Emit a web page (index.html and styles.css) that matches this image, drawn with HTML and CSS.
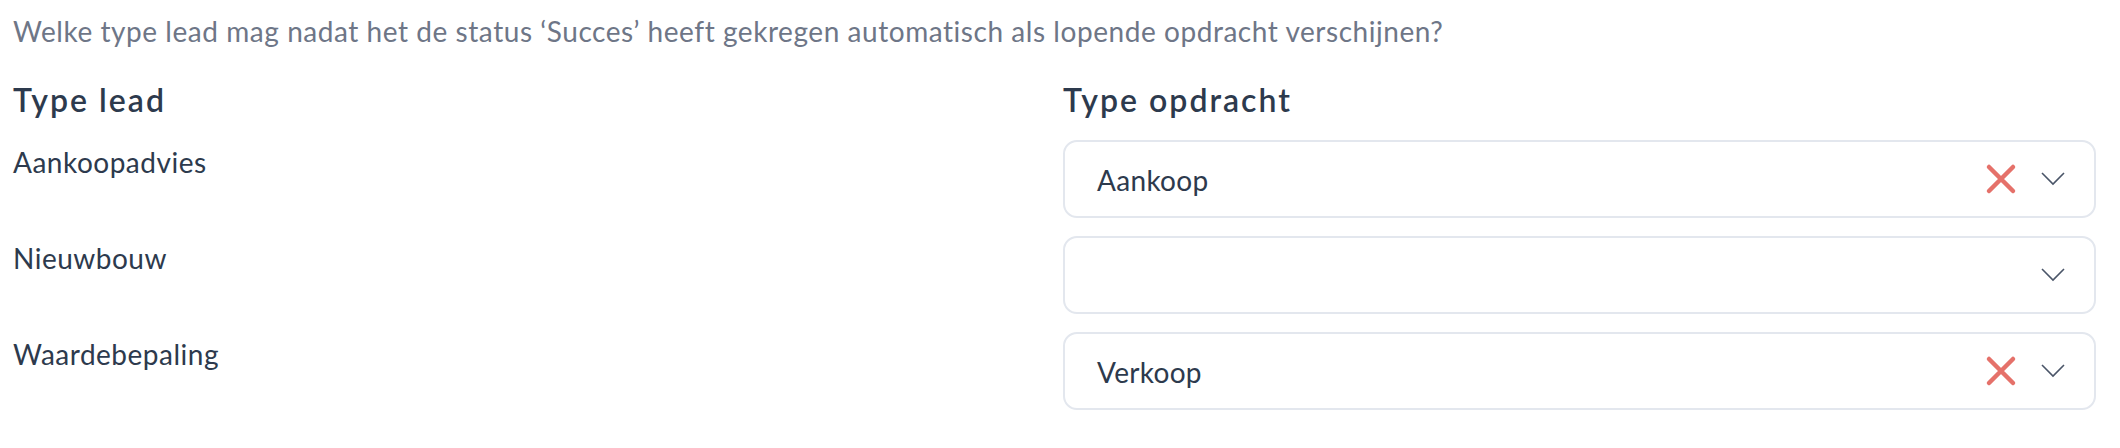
FILE: index.html
```html
<!DOCTYPE html>
<html lang="nl">
<head>
    <meta charset="UTF-8">
    <meta name="viewport" content="width=device-width, initial-scale=1.0">
    <title>Lopende opdrachten</title>
    <link rel="stylesheet" href="styles.css">
</head>
<body>
    <div class="page">
        <p class="question">Welke type lead mag nadat het de status ‘Succes’ heeft gekregen automatisch als lopende opdracht verschijnen?</p>

        <div class="mapping">
            <h3 class="col-title">Type lead</h3>
            <h3 class="col-title">Type opdracht</h3>

            <div class="lead-label">Aankoopadvies</div>
            <div class="select">
                <span class="select-value">Aankoop</span>
                <span class="select-icons">
                    <svg class="icon-clear" viewBox="0 0 32 32"><path d="M4 4 L28 28 M28 4 L4 28"/></svg>
                    <svg class="icon-chevron" viewBox="0 0 24 14"><path d="M1 1 L12 12 L23 1"/></svg>
                </span>
            </div>

            <div class="lead-label">Nieuwbouw</div>
            <div class="select">
                <span class="select-value"></span>
                <span class="select-icons">
                    <svg class="icon-chevron" viewBox="0 0 24 14"><path d="M1 1 L12 12 L23 1"/></svg>
                </span>
            </div>

            <div class="lead-label">Waardebepaling</div>
            <div class="select">
                <span class="select-value">Verkoop</span>
                <span class="select-icons">
                    <svg class="icon-clear" viewBox="0 0 32 32"><path d="M4 4 L28 28 M28 4 L4 28"/></svg>
                    <svg class="icon-chevron" viewBox="0 0 24 14"><path d="M1 1 L12 12 L23 1"/></svg>
                </span>
            </div>
        </div>
    </div>
</body>
</html>
```

FILE: styles.css
```css
:root {
    --text-dark: #2d3a4d;
    --text-muted: #6e7687;
    --border: #e3e7ee;
    --danger: #e5716a;
}

body {
    margin: 0;
    background: #fff;
    font-family: Lato, "Open Sans", sans-serif;
    color: var(--text-dark);
}

.page {
    padding: 14px 24px 0 13px;
}

/* vraag bovenaan */
.question {
    margin: 0;
    font-size: 28px;
    line-height: 34px;
    color: var(--text-muted);
    letter-spacing: 0.55px;
}

/* twee kolommen: lead -> opdracht */
.mapping {
    margin-top: 33px;
    display: grid;
    grid-template-columns: 1fr 1fr;
    column-gap: 17px;
    row-gap: 18px;
    align-items: start;
}

.col-title {
    margin: 0 0 3px;
    font-size: 32px;
    line-height: 38px;
    font-weight: 600;
    letter-spacing: 2px;
}

.lead-label {
    padding-top: 5px;
    font-size: 28px;
    line-height: 34px;
    letter-spacing: 0.5px;
}

.select {
    height: 78px;
    box-sizing: border-box;
    border: 2px solid var(--border);
    border-radius: 14px;
    display: flex;
    align-items: center;
    padding: 0 29px 0 32px;
}

.select-value {
    flex: 1;
    font-size: 28px;
    line-height: 34px;
    letter-spacing: 0.3px;
    padding-top: 2px;
}

.select-icons {
    display: flex;
    align-items: center;
    gap: 24px;
}

.icon-clear {
    width: 32px;
    height: 32px;
    fill: none;
    stroke: var(--danger);
    stroke-width: 4.5;
    stroke-linecap: round;
}

.icon-chevron {
    width: 24px;
    height: 14px;
    fill: none;
    stroke: #4a5568;
    stroke-width: 1.6;
}
```
